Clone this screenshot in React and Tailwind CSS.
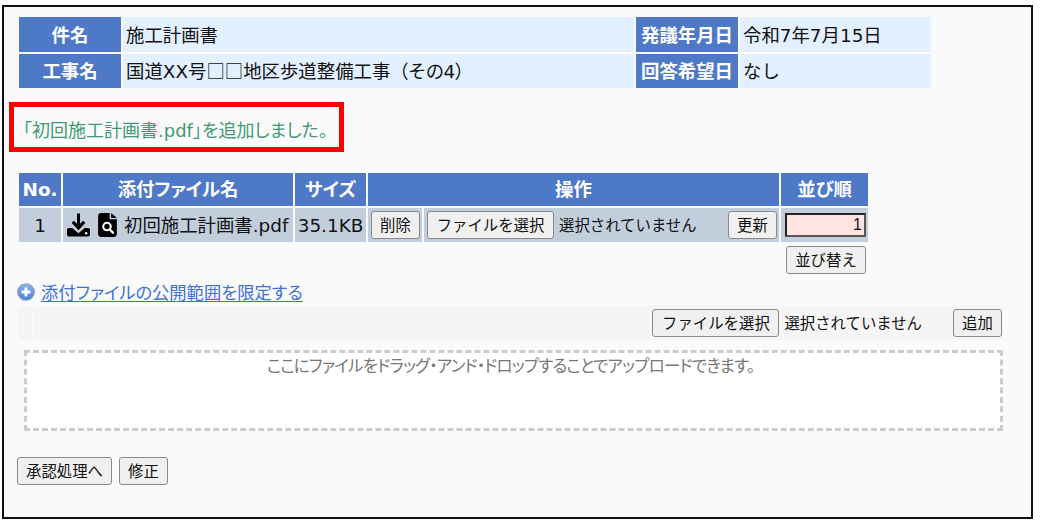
const fontStack = "font-['DejaVu_Sans','Noto_Sans_CJK_JP',sans-serif]";
const palt = "[font-feature-settings:'palt']";
const btn = "h-[28px] rounded-[3px] border border-[#8a8a8a] bg-[#f0f0f0] pt-[1px] text-[15.4px] leading-none text-[#111] whitespace-nowrap font-['Liberation_Sans','Noto_Sans_CJK_JP',sans-serif]";
const th = `bg-[#4e79c7] text-white font-bold text-center p-0 whitespace-nowrap ${palt}`;

function DownloadIcon() {
    return (
        <svg width="23" height="24" viewBox="0 0 24 24" className="mr-[8px] shrink-0">
            <path d="M10.4 0h3.2v12h-3.2z" fill="#000" />
            <path d="M6 8.6L12 15l6-6.4" fill="none" stroke="#000" strokeWidth="3.4" />
            <path d="M2 15h3.5l6.5 5.5 6.5-5.5H22a2 2 0 0 1 2 2v5a2 2 0 0 1-2 2H2a2 2 0 0 1-2-2v-5a2 2 0 0 1 2-2z" fill="#000" />
            <circle cx="20" cy="20.6" r="1.3" fill="#fff" />
        </svg>
    );
}

function FileSearchIcon() {
    return (
        <svg width="19" height="24" viewBox="0 0 18 23" className="shrink-0">
            <path d="M3 0H11V6H18V20Q18 23 15 23H3Q0 23 0 20V3Q0 0 3 0Z" fill="#000" />
            <path d="M12.5 0L18 4.7H12.5Z" fill="#000" />
            <circle cx="8.5" cy="13" r="3.6" fill="none" stroke="#fff" strokeWidth="2" />
            <path d="M11.2 15.8L14.2 18.8" stroke="#fff" strokeWidth="2.2" strokeLinecap="round" />
        </svg>
    );
}

function PlusIcon() {
    return (
        <svg width="18" height="18" viewBox="0 0 18 18" className="mt-[-3px] shrink-0">
            <defs>
                <linearGradient id="plusFill" x1="0" y1="0" x2="0" y2="1">
                    <stop offset="0" stopColor="#8fb6f2" />
                    <stop offset="1" stopColor="#3f7fe0" />
                </linearGradient>
            </defs>
            <circle cx="9" cy="9" r="8.2" fill="url(#plusFill)" stroke="#8a9bb0" strokeWidth="1.3" />
            <path d="M4.5 9H13.5M9 4.5V13.5" stroke="#fff" strokeWidth="2.8" />
        </svg>
    );
}

function FilePicker({ gap }) {
    return (
        <div className="flex items-center">
            <button className={`${btn} w-[127px]`}>ファイルを選択</button>
            <span className={`ml-[5px] ${gap} pt-[1px] text-[15.4px] text-[#111] font-['Liberation_Sans','Noto_Sans_CJK_JP',sans-serif]`}>選択されていません</span>
        </div>
    );
}

export default function App() {
    return (
        <div className={`h-[526px] w-[1041px] overflow-hidden bg-white pl-[2px] pt-[5px] text-[18.4px] text-[#111] ${fontStack}`}>
            <div className="h-[514px] w-[1031px] border-2 border-[#111] bg-[#fafafa] pl-[13px] pt-[8px]">
                {/* Summary table */}
                <table className="table-fixed border-separate border-spacing-[2px] w-[916px]">
                    <colgroup>
                        <col className="w-[102px]" />
                        <col className="w-[511px]" />
                        <col className="w-[102px]" />
                        <col className="w-[191px]" />
                    </colgroup>
                    <tbody>
                        <tr className="h-[35px]">
                            <th className={`${th} pt-[2px]`}>件名</th>
                            <td className="bg-[#e3f0ff] pl-[3px] pt-[2px]">施工計画書</td>
                            <th className={`${th} pt-[2px]`}>発議年月日</th>
                            <td className="bg-[#e3f0ff] pl-[3px] pt-[2px]">令和7年7月15日</td>
                        </tr>
                        <tr className="h-[34px]">
                            <th className={`${th} pt-[1px]`}>工事名</th>
                            <td className="bg-[#e3f0ff] pl-[3px] pt-[1px]">
                                国道XX号<span className="font-['Noto_Sans_CJK_JP']">□□</span>地区歩道整備工事<span className="tracking-[-0.7px]">（その4）</span>
                            </td>
                            <th className={`${th} pt-[1px]`}>回答希望日</th>
                            <td className="bg-[#e3f0ff] pl-[3px] pt-[1px]">なし</td>
                        </tr>
                    </tbody>
                </table>

                {/* Added message */}
                <div className={`ml-[-8px] mt-[12px] flex h-[50px] w-[335px] items-center whitespace-nowrap border-[5px] border-[#ff0000] pl-[9px] pt-[7px] text-[18px] text-[#3f9a74] ${palt}`}>
                    「初回施工計画書.pdf」を追加しました。
                </div>

                {/* Attachments */}
                <table className="mt-[19px] table-fixed border-separate border-spacing-[2px] w-[853px]">
                    <colgroup>
                        <col className="w-[42px]" />
                        <col className="w-[230px]" />
                        <col className="w-[71px]" />
                        <col className="w-[54px]" />
                        <col className="w-[355px]" />
                        <col className="w-[87px]" />
                    </colgroup>
                    <tbody>
                        <tr className="h-[33px]">
                            <th className={th}>No.</th>
                            <th className={th}>添付ファイル名</th>
                            <th className={th}>サイズ</th>
                            <th className={th} colSpan={2}>操作</th>
                            <th className={th}>並び順</th>
                        </tr>
                        <tr className="h-[34px]">
                            <td className="bg-[#c3cedc] pt-[2px] text-center">1</td>
                            <td className="bg-[#c3cedc] pl-[4px]">
                                <div className="flex items-center whitespace-nowrap">
                                    <DownloadIcon />
                                    <FileSearchIcon />
                                    <span className="ml-[7px] pt-[2px]">初回施工計画書.pdf</span>
                                </div>
                            </td>
                            <td className="bg-[#c3cedc] pt-[2px] text-center whitespace-nowrap">35.1KB</td>
                            <td className="bg-[#c3cedc] pl-[3px]">
                                <button className={`${btn} w-[49px]`}>削除</button>
                            </td>
                            <td className="bg-[#c3cedc] pl-[3px] pr-[2px]">
                                <div className="flex items-center justify-between">
                                    <FilePicker gap="" />
                                    <button className={`${btn} w-[49px]`}>更新</button>
                                </div>
                            </td>
                            <td className="bg-[#c3cedc] pl-[4px]">
                                <input
                                    readOnly
                                    value="1"
                                    className="block h-[24px] w-[81px] border-2 border-t-[#222] border-l-[#222] border-r-[#555] border-b-[#555] bg-[#ffe4e1] pr-[2px] text-right font-['Liberation_Sans'] text-[16px] outline-none"
                                />
                            </td>
                        </tr>
                        <tr>
                            <td colSpan={5}></td>
                            <td className="pl-[5px] pt-[2px]">
                                <button className={`${btn} w-[80px]`}>並び替え</button>
                            </td>
                        </tr>
                    </tbody>
                </table>

                {/* Public range link */}
                <a className={`mt-[5px] flex h-[24px] items-center text-[17.3px] text-[#3f70d8] ${palt}`}>
                    <PlusIcon />
                    <span className="ml-[6px] pt-[2px] underline underline-offset-2">添付ファイルの公開範囲を限定する</span>
                </a>

                {/* Upload bar */}
                <div className="ml-[2px] mt-[1px] flex h-[34px] w-[984px] bg-[#f5f5f5]">
                    <div className="w-[14px] border-r border-[#fafafa]"></div>
                    <div className="flex flex-1 items-center justify-end pr-[1px]">
                        <FilePicker gap="mr-[31px]" />
                        <button className={`${btn} w-[49px]`}>追加</button>
                    </div>
                </div>

                {/* Drop zone */}
                <div className={`ml-[7px] mt-[10px] h-[81px] w-[979px] border-[3px] border-dashed border-[#cccccc] bg-white pr-[6px] pt-[2px] text-center text-[16.5px] tracking-[-0.8px] text-[#777] ${palt}`}>
                    ここにファイルをドラッグ・アンド・ドロップすることでアップロードできます。
                </div>

                {/* Footer buttons */}
                <div className="mt-[26px] flex gap-[7px]">
                    <button className={`${btn} w-[95px]`}>承認処理へ</button>
                    <button className={`${btn} w-[49px]`}>修正</button>
                </div>
            </div>
        </div>
    );
}
